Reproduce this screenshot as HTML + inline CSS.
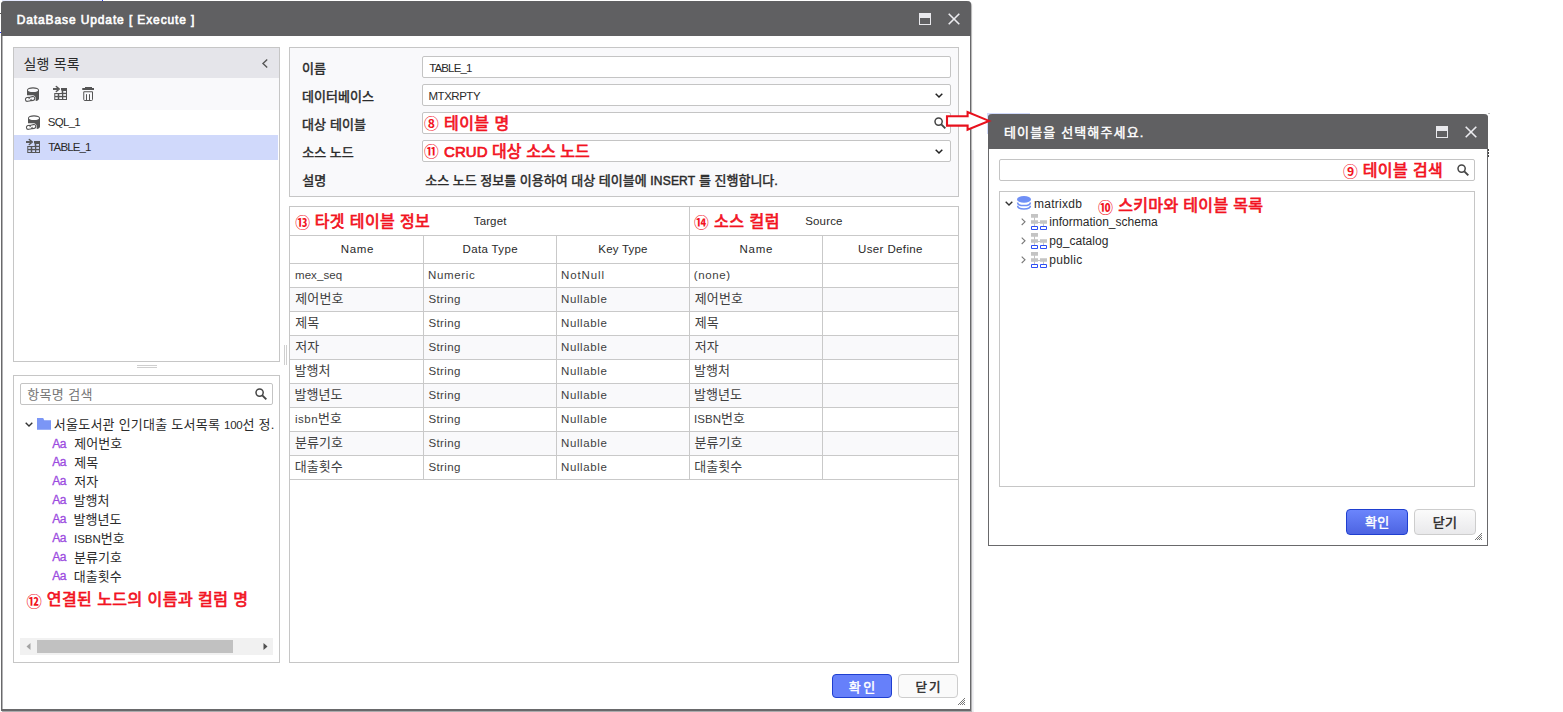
<!DOCTYPE html>
<html lang="ko">
<head>
<meta charset="utf-8">
<title>DataBase Update [ Execute ]</title>
<style>
*{box-sizing:border-box;margin:0;padding:0}
html,body{width:1563px;height:712px;overflow:hidden;background:#fff}
body{position:relative;font-family:"Liberation Sans","Noto Sans CJK KR",sans-serif;font-size:12px;color:#222}
div{position:absolute}
.t{white-space:nowrap;line-height:16px;height:16px;font-size:13px;color:#2a2a2a}
.l{font-size:11.5px}
.l2{font-size:12px}
.b{font-weight:400;-webkit-text-stroke:0.45px currentColor}
.w{color:#fff}
.g{color:#404040}
.red{color:#f2131f;font-weight:400;-webkit-text-stroke:0.7px currentColor;font-size:16px;line-height:20px;height:20px;white-space:nowrap}
.cn{color:#f2131f;font-size:15px;line-height:20px;height:20px;white-space:nowrap;font-weight:700}
.title{background:#606062}
.panel{border:1px solid #c6c6c6;background:#fff}
.inp{border:1px solid #c4c4c4;background:#fff;border-radius:2px}
.btn{border-radius:4px}
.ok{background:#6680fa;border:1px solid #1f3fd0}
.cl{background:#fafafa;border:1px solid #cdcdcd}
.hl{background:#c9c9c9;height:1px}
.vl{background:#c9c9c9;width:1px}
svg{position:absolute;overflow:visible}
i{font-style:normal}
</style>
</head>
<body>
<!-- main dialog -->
<div style="left:2px;top:0;width:100px;height:1px;background:#e6eaff"></div><div style="left:102px;top:0;width:1px;height:1px;background:#2b3bf0"></div><div style="left:0;top:13px;width:1px;height:1px;background:#555"></div><div style="left:0;top:32px;width:1px;height:1px;background:#2b3bf0"></div>
<div style="left:971px;top:150px;width:3px;height:562px;background:#f1f1f4"></div><div style="left:2px;top:711px;width:972px;height:1px;background:#ebebee"></div>
<div style="left:1px;top:1px;width:970px;height:710px;background:#fff;border-radius:4px 4px 0 0;border:solid #69696b;border-width:0 1px 2px 1px;box-shadow:1px 1px 1px rgba(0,0,0,.3),inset 1px 0 0 #b4b4b6"></div>
<div class="title" style="left:1px;top:1px;width:970px;height:35px;border-radius:4px 4px 0 0"></div>
<svg style="left:919px;top:13px" width="12" height="12" viewBox="0 0 12 12"><path d="M0 0h12v12H0z" fill="#e9e9ed"/><path d="M1 5h10v6H1z" fill="#606062"/></svg>
<svg style="left:948px;top:13px" width="12" height="12" viewBox="0 0 12 12"><path d="M.7.7l10.6 10.6M11.3.7L.7 11.3" stroke="#ececf0" stroke-width="1.6"/></svg>
<div class="panel" style="left:13px;top:47px;width:267px;height:315px"></div>
<div style="left:14px;top:48px;width:265px;height:30px;background:#e5e5ea"></div>
<div style="left:14px;top:78px;width:265px;height:32px;background:#f9f9fb"></div>
<div style="left:14px;top:135px;width:264px;height:25px;background:#d0d9fb"></div>
<svg style="left:261.5px;top:58.7px" width="6" height="9" viewBox="0 0 6 9"><path d="M5.2.6L1 4.5l4.2 3.9" fill="none" stroke="#555" stroke-width="1.4"/></svg>
<svg style="left:25px;top:86.5px" width="15" height="15" viewBox="0 0 15 15"><path fill-rule="evenodd" d="M2 3.1A6 2.9 0 0 1 14 3.1V11.4A6 2.75 0 0 1 10.7 14V11.6C10.7 9.6 9.6 8.3 7.6 8.3H2zM2.9 3.2A5.1 1.8 0 0 0 13.1 3.2A5.1 1.8 0 0 0 2.9 3.2z" fill="#555"/><g fill="none" stroke="#555" stroke-width="1.05" transform="rotate(-10 5 12)"><path d="M4.6 10.1H2.3a1.9 1.9 0 0 0 0 3.8H4.2c1.2 0 1.9-.9 1.9-1.9M5.6 13.9H7.9a1.9 1.9 0 0 0 0-3.8H6c-1.2 0-1.9.9-1.9 1.9"/></g></svg>
<svg style="left:53px;top:86px" width="14" height="14" viewBox="0 0 14 14"><path d="M8 2H14V14H1.25V7H8.7V4.4H8z" fill="#555"/><g fill="#f9f9fb"><rect x="2.25" y="8.1" width="2.5" height="1.75"/><rect x="6.25" y="8.1" width="2.75" height="1.75"/><rect x="10.25" y="8.1" width="2.75" height="1.75"/><rect x="2.25" y="11.25" width="2.5" height="1.75"/><rect x="6.25" y="11.25" width="2.75" height="1.75"/><rect x="10.25" y="11.25" width="2.75" height="1.75"/><rect x="10.25" y="5" width="2.75" height="1.75"/></g><path d="M0 3H5.6" stroke="#555" stroke-width="1.9" fill="none"/><path d="M3.3.5L6.3 3 3.3 5.5" stroke="#555" stroke-width="1.5" fill="none" stroke-linecap="round" stroke-linejoin="round"/></svg>
<svg style="left:82px;top:87px" width="12" height="15" viewBox="0 0 12 15"><path d="M3 0h7v1.2H3zM.25 1h11.75v2H.25z" fill="#555"/><path d="M1.75 4.75h8.75v7.75a1 1 0 0 1-1 1h-6.75a1 1 0 0 1-1-1z" fill="none" stroke="#555" stroke-width="1"/><path d="M4.5 7.2V13M7.5 7.2V13" stroke="#555" stroke-width="1"/></svg>
<svg style="left:26px;top:114.7px" width="15" height="15" viewBox="0 0 15 15"><path fill-rule="evenodd" d="M2 3.1A6 2.9 0 0 1 14 3.1V11.4A6 2.75 0 0 1 10.7 14V11.6C10.7 9.6 9.6 8.3 7.6 8.3H2zM2.9 3.2A5.1 1.8 0 0 0 13.1 3.2A5.1 1.8 0 0 0 2.9 3.2z" fill="#555"/><g fill="none" stroke="#555" stroke-width="1.05" transform="rotate(-10 5 12)"><path d="M4.6 10.1H2.3a1.9 1.9 0 0 0 0 3.8H4.2c1.2 0 1.9-.9 1.9-1.9M5.6 13.9H7.9a1.9 1.9 0 0 0 0-3.8H6c-1.2 0-1.9.9-1.9 1.9"/></g></svg>
<svg style="left:26px;top:139px" width="14" height="14" viewBox="0 0 14 14"><path d="M8 2H14V14H1.25V7H8.7V4.4H8z" fill="#555"/><g fill="#d0d9fb"><rect x="2.25" y="8.1" width="2.5" height="1.75"/><rect x="6.25" y="8.1" width="2.75" height="1.75"/><rect x="10.25" y="8.1" width="2.75" height="1.75"/><rect x="2.25" y="11.25" width="2.5" height="1.75"/><rect x="6.25" y="11.25" width="2.75" height="1.75"/><rect x="10.25" y="11.25" width="2.75" height="1.75"/><rect x="10.25" y="5" width="2.75" height="1.75"/></g><path d="M0 3H5.6" stroke="#555" stroke-width="1.9" fill="none"/><path d="M3.3.5L6.3 3 3.3 5.5" stroke="#555" stroke-width="1.5" fill="none" stroke-linecap="round" stroke-linejoin="round"/></svg>
<div style="left:137px;top:365px;width:20px;height:3px;border-top:1px solid #cfcfcf;border-bottom:1px solid #cfcfcf"></div>
<div style="left:284px;top:345px;width:3px;height:20px;border-left:1px solid #cfcfcf;border-right:1px solid #cfcfcf"></div>
<div class="panel" style="left:13px;top:375px;width:267px;height:288px"></div>
<div class="inp" style="left:20px;top:383px;width:253px;height:22px"></div>
<svg style="left:255px;top:388px" width="12" height="12" viewBox="0 0 12 12"><circle cx="4.6" cy="4.6" r="3.6" fill="none" stroke="#444" stroke-width="1.5"/><path d="M7.3 7.3l4 4" stroke="#444" stroke-width="1.9"/></svg>
<svg style="left:24.5px;top:422px" width="8" height="5" viewBox="0 0 8 5"><path d="M.7.7L4 4l3.3-3.3" fill="none" stroke="#333" stroke-width="1.4"/></svg>
<svg style="left:37px;top:418px" width="14" height="12" viewBox="0 0 14 12"><path d="M0 0h6.2l1 2.3H14V11.8H0z" fill="#7b96f6"/></svg>
<div style="left:20px;top:638px;width:253px;height:17px;background:#f1f1f1"></div>
<div style="left:37px;top:640px;width:196px;height:13px;background:#c1c1c1"></div>
<svg style="left:26px;top:643px" width="5" height="7" viewBox="0 0 5 7"><path d="M4.5 0L.5 3.5l4 3.5z" fill="#a3a3a3"/></svg>
<svg style="left:263px;top:643px" width="5" height="7" viewBox="0 0 5 7"><path d="M.5 0l4 3.5-4 3.5z" fill="#505050"/></svg>
<div class="panel" style="left:289px;top:47px;width:670px;height:150px;background:#f9f9fb"></div>
<div class="inp" style="left:422px;top:56px;width:529px;height:22px"></div>
<div class="inp" style="left:422px;top:84px;width:529px;height:22px"></div>
<div class="inp" style="left:422px;top:112px;width:529px;height:22px"></div>
<div class="inp" style="left:422px;top:140px;width:529px;height:22px"></div>
<svg style="left:935.3px;top:92.6px" width="8" height="5" viewBox="0 0 8 5"><path d="M.7.7L4 4l3.3-3.3" fill="none" stroke="#222" stroke-width="1.5"/></svg>
<svg style="left:935.3px;top:148.6px" width="8" height="5" viewBox="0 0 8 5"><path d="M.7.7L4 4l3.3-3.3" fill="none" stroke="#222" stroke-width="1.5"/></svg>
<svg style="left:934px;top:117px" width="12" height="12" viewBox="0 0 12 12"><circle cx="4.6" cy="4.6" r="3.6" fill="none" stroke="#444" stroke-width="1.5"/><path d="M7.3 7.3l4 4" stroke="#444" stroke-width="1.9"/></svg>
<div class="panel" style="left:289px;top:206px;width:670px;height:457px"></div>
<div style="left:290px;top:288px;width:668px;height:23px;background:#f9f9fb"></div>
<div style="left:290px;top:336px;width:668px;height:23px;background:#f9f9fb"></div>
<div style="left:290px;top:384px;width:668px;height:23px;background:#f9f9fb"></div>
<div style="left:290px;top:432px;width:668px;height:23px;background:#f9f9fb"></div>
<div class="hl" style="left:290px;top:235px;width:668px"></div>
<div class="hl" style="left:290px;top:263px;width:668px"></div>
<div class="hl" style="left:290px;top:287px;width:668px"></div>
<div class="hl" style="left:290px;top:311px;width:668px"></div>
<div class="hl" style="left:290px;top:335px;width:668px"></div>
<div class="hl" style="left:290px;top:359px;width:668px"></div>
<div class="hl" style="left:290px;top:383px;width:668px"></div>
<div class="hl" style="left:290px;top:407px;width:668px"></div>
<div class="hl" style="left:290px;top:431px;width:668px"></div>
<div class="hl" style="left:290px;top:455px;width:668px"></div>
<div class="hl" style="left:290px;top:479px;width:668px"></div>
<div class="vl" style="left:423px;top:235px;height:245px"></div>
<div class="vl" style="left:556px;top:235px;height:245px"></div>
<div class="vl" style="left:822px;top:235px;height:245px"></div>
<div class="vl" style="left:689px;top:207px;height:273px"></div>
<div class="btn ok" style="left:832px;top:674px;width:60px;height:24px"></div>
<div class="btn cl" style="left:898px;top:674px;width:60px;height:24px"></div>
<svg style="left:958px;top:698px" width="7" height="7" viewBox="0 0 7 7"><path d="M0 7L7 0M2 7L7 2M4 7l3-3M6 7l1-1" stroke="#666" stroke-width="0.9"/></svg>
<!-- table select dialog -->
<div style="left:987px;top:113px;width:43px;height:21px;background:#d0d9fb"></div>
<div style="left:988px;top:114px;width:500px;height:432px;background:#fff;border-radius:4px 4px 0 0;border:solid #69696b;border-width:0 1px 1px 1px"></div>
<div class="title" style="left:988px;top:114px;width:500px;height:35px;border-radius:4px 4px 0 0"></div>
<svg style="left:1436px;top:126px" width="12" height="12" viewBox="0 0 12 12"><path d="M0 0h12v12H0z" fill="#e9e9ed"/><path d="M1 5h10v6H1z" fill="#606062"/></svg>
<svg style="left:1465px;top:126px" width="12" height="12" viewBox="0 0 12 12"><path d="M.7.7l10.6 10.6M11.3.7L.7 11.3" stroke="#ececf0" stroke-width="1.6"/></svg>
<div class="inp" style="left:999px;top:159px;width:476px;height:22px"></div>
<svg style="left:1457px;top:164px" width="12" height="12" viewBox="0 0 12 12"><circle cx="4.6" cy="4.6" r="3.6" fill="none" stroke="#444" stroke-width="1.5"/><path d="M7.3 7.3l4 4" stroke="#444" stroke-width="1.9"/></svg>
<div class="panel" style="left:999px;top:191px;width:476px;height:296px"></div>
<svg style="left:1004.5px;top:201px" width="8" height="5" viewBox="0 0 8 5"><path d="M.7.7L4 4l3.3-3.3" fill="none" stroke="#333" stroke-width="1.4"/></svg>
<svg style="left:1017px;top:196px" width="14" height="14" viewBox="0 0 14 14"><ellipse cx="7" cy="3.4" rx="7" ry="3.4" fill="#6f8ff6"/><path d="M.6 6.4c0 1.9 2.9 3.2 6.4 3.2s6.4-1.3 6.4-3.2" fill="none" stroke="#6f8ff6" stroke-width="1.5"/><path d="M.6 9.8c0 1.9 2.9 3.2 6.4 3.2s6.4-1.3 6.4-3.2" fill="none" stroke="#6f8ff6" stroke-width="1.5"/></svg>
<svg style="left:1021px;top:218.2px" width="5" height="8" viewBox="0 0 5 8"><path d="M.7.6L4 3.8.7 7" fill="none" stroke="#777" stroke-width="1.1"/></svg>
<svg style="left:1031px;top:214px" width="16" height="16" viewBox="0 0 16 16"><path d="M0 0h7v3.8H0zM3 3.8h1v2.4H3zM0 6.2h7v3.6H0zM9 6.2h7v3.6H9zM7 8h2v1H7zM3 9.8h1v2.2H3zM12 9.8h1v2.2h-1z" fill="#c4c4c4"/><path d="M.5 12.5h6v3h-6zM9.5 12.5h6v3h-6z" fill="#fff" stroke="#2f4ff5" stroke-width="1"/></svg>
<svg style="left:1021px;top:237.2px" width="5" height="8" viewBox="0 0 5 8"><path d="M.7.6L4 3.8.7 7" fill="none" stroke="#777" stroke-width="1.1"/></svg>
<svg style="left:1031px;top:233px" width="16" height="16" viewBox="0 0 16 16"><path d="M0 0h7v3.8H0zM3 3.8h1v2.4H3zM0 6.2h7v3.6H0zM9 6.2h7v3.6H9zM7 8h2v1H7zM3 9.8h1v2.2H3zM12 9.8h1v2.2h-1z" fill="#c4c4c4"/><path d="M.5 12.5h6v3h-6zM9.5 12.5h6v3h-6z" fill="#fff" stroke="#2f4ff5" stroke-width="1"/></svg>
<svg style="left:1021px;top:256.2px" width="5" height="8" viewBox="0 0 5 8"><path d="M.7.6L4 3.8.7 7" fill="none" stroke="#777" stroke-width="1.1"/></svg>
<svg style="left:1031px;top:252px" width="16" height="16" viewBox="0 0 16 16"><path d="M0 0h7v3.8H0zM3 3.8h1v2.4H3zM0 6.2h7v3.6H0zM9 6.2h7v3.6H9zM7 8h2v1H7zM3 9.8h1v2.2H3zM12 9.8h1v2.2h-1z" fill="#c4c4c4"/><path d="M.5 12.5h6v3h-6zM9.5 12.5h6v3h-6z" fill="#fff" stroke="#2f4ff5" stroke-width="1"/></svg>
<div class="btn ok" style="left:1346px;top:509px;width:62px;height:26px;background:linear-gradient(#6b85fc,#4d64e2)"></div>
<div class="btn cl" style="left:1414px;top:509px;width:62px;height:26px;background:linear-gradient(#fbfbfb,#e9e9eb)"></div>
<svg style="left:1475px;top:533px" width="7" height="7" viewBox="0 0 7 7"><path d="M0 7L7 0M2 7L7 2M4 7l3-3M6 7l1-1" stroke="#666" stroke-width="0.9"/></svg>
<div style="left:1488px;top:149px;width:1px;height:9px;background:repeating-linear-gradient(#444 0 2px,#fff 2px 3px)"></div><div style="left:1488px;top:113px;width:2px;height:1px;background:#bbb"></div>
<svg style="left:940px;top:105px" width="56" height="32" viewBox="940 105 56 32"><path d="M947 116.2H967.6V112.1L989 120.9 967.6 129.7V125.6H947z" fill="#fff" stroke="#e8111d" stroke-width="2.1" stroke-linejoin="miter"/></svg>
<!-- text -->
<div class="t b w" style="left:16.75px;top:12px;font-size:12px;-webkit-text-stroke:0.6px currentColor;letter-spacing:0.88px">DataBase Update [ Execute ]</div>
<div class="t" style="left:23.5px;top:56px;font-size:14px;letter-spacing:0.21px">실행 목록</div>
<div class="t l" style="left:47.75px;top:114px;letter-spacing:-0.70px">SQL_1</div>
<div class="t l" style="left:48.25px;top:139px;letter-spacing:-0.85px">TABLE_1</div>
<div class="t" style="left:27.25px;top:387px;color:#777;letter-spacing:0.35px">항목명 검색</div>
<div class="t" style="left:53.75px;top:417px;letter-spacing:0.25px">서울도서관 인기대출 도서목록 <i style="letter-spacing:-0.3px;font-size:11.5px">100</i>선 정.</div>
<div class="t l2" style="left:52.25px;top:436px;color:#9c4be0;-webkit-text-stroke:0.3px currentColor;letter-spacing:-0.40px">Aa</div>
<div class="t" style="left:74.25px;top:436px;letter-spacing:0.03px">제어번호</div>
<div class="t l2" style="left:52.25px;top:454px;color:#9c4be0;-webkit-text-stroke:0.3px currentColor;letter-spacing:-0.40px">Aa</div>
<div class="t" style="left:74.25px;top:455px;">제목</div>
<div class="t l2" style="left:52.25px;top:473px;color:#9c4be0;-webkit-text-stroke:0.3px currentColor;letter-spacing:-0.40px">Aa</div>
<div class="t" style="left:74.25px;top:474px;">저자</div>
<div class="t l2" style="left:52.25px;top:492px;color:#9c4be0;-webkit-text-stroke:0.3px currentColor;letter-spacing:-0.40px">Aa</div>
<div class="t" style="left:73.5px;top:493px;">발행처</div>
<div class="t l2" style="left:52.25px;top:511px;color:#9c4be0;-webkit-text-stroke:0.3px currentColor;letter-spacing:-0.40px">Aa</div>
<div class="t" style="left:73.5px;top:512px;">발행년도</div>
<div class="t l2" style="left:52.25px;top:530px;color:#9c4be0;-webkit-text-stroke:0.3px currentColor;letter-spacing:-0.40px">Aa</div>
<div class="t" style="left:74px;top:531px;letter-spacing:0.00px"><i style="letter-spacing:-0.03px;font-size:11.5px">ISBN</i>번호</div>
<div class="t l2" style="left:52.25px;top:549px;color:#9c4be0;-webkit-text-stroke:0.3px currentColor;letter-spacing:-0.40px">Aa</div>
<div class="t" style="left:74px;top:550px;">분류기호</div>
<div class="t l2" style="left:52.25px;top:568px;color:#9c4be0;-webkit-text-stroke:0.3px currentColor;letter-spacing:-0.40px">Aa</div>
<div class="t" style="left:73.75px;top:569px;">대출횟수</div>
<div class="cn" style="left:26.5px;top:592px;font-size:15.25px">⑫</div>
<div class="red" style="left:46.75px;top:590px;letter-spacing:0.45px">연결된 노드의 이름과 컬럼 명</div>
<div class="t b" style="left:302px;top:61px;letter-spacing:0.10px">이름</div>
<div class="t b" style="left:302px;top:89px;letter-spacing:0.05px">데이터베이스</div>
<div class="t b" style="left:302px;top:117px;letter-spacing:0.12px">대상 테이블</div>
<div class="t b" style="left:302.25px;top:145px;">소스 노드</div>
<div class="t b" style="left:302.25px;top:173px;letter-spacing:0.10px">설명</div>
<div class="t l" style="left:429.25px;top:60px;letter-spacing:-0.88px">TABLE_1</div>
<div class="t l" style="left:428.5px;top:88px;letter-spacing:-0.48px">MTXRPTY</div>
<div class="cn" style="left:424px;top:114px;font-size:14.70px">⑧</div>
<div class="red" style="left:444px;top:114px;letter-spacing:0.46px">테이블 명</div>
<div class="cn" style="left:424px;top:142px;font-size:14.70px">⑪</div>
<div class="red" style="left:444px;top:142px;letter-spacing:0.06px"><i style="font-size:15px">CRUD</i> 대상 소스 노드</div>
<div class="t b" style="left:425.25px;top:173px;letter-spacing:0.00px">소스 노드 정보를 이용하여 대상 테이블에 <i style="letter-spacing:0.21px;font-size:12px">INSERT</i> 를 진행합니다.</div>
<div class="cn" style="left:295.25px;top:213px;font-size:14.75px">⑬</div>
<div class="red" style="left:314.75px;top:212px;letter-spacing:0.38px">타겟 테이블 정보</div>
<div class="t l" style="left:473.75px;top:213px;letter-spacing:0.13px">Target</div>
<div class="cn" style="left:694px;top:213px;font-size:14.75px">⑭</div>
<div class="red" style="left:714px;top:212px;letter-spacing:0.56px">소스 컬럼</div>
<div class="t l" style="left:805.25px;top:213px;letter-spacing:0.15px">Source</div>
<div class="t l" style="left:340.75px;top:241px;letter-spacing:0.67px">Name</div>
<div class="t l" style="left:462.5px;top:241px;letter-spacing:0.36px">Data Type</div>
<div class="t l" style="left:598.25px;top:241px;letter-spacing:0.21px">Key Type</div>
<div class="t l" style="left:739.5px;top:241px;letter-spacing:0.75px">Name</div>
<div class="t l" style="left:858px;top:241px;letter-spacing:0.38px">User Define</div>
<div class="t l g" style="left:295px;top:267px;letter-spacing:0.07px">mex_seq</div>
<div class="t l g" style="left:428px;top:267px;letter-spacing:0.67px">Numeric</div>
<div class="t l g" style="left:561px;top:267px;letter-spacing:0.90px">NotNull</div>
<div class="t l g" style="left:693.75px;top:267px;letter-spacing:0.60px">(none)</div>
<div class="t g" style="left:295.25px;top:291px;letter-spacing:0.15px">제어번호</div>
<div class="t l g" style="left:428.5px;top:291px;letter-spacing:0.35px">String</div>
<div class="t l g" style="left:561px;top:291px;letter-spacing:0.61px">Nullable</div>
<div class="t g" style="left:694.75px;top:291px;letter-spacing:0.15px">제어번호</div>
<div class="t g" style="left:295.25px;top:315px;">제목</div>
<div class="t l g" style="left:428.5px;top:315px;letter-spacing:0.35px">String</div>
<div class="t l g" style="left:561px;top:315px;letter-spacing:0.61px">Nullable</div>
<div class="t g" style="left:694.75px;top:315px;">제목</div>
<div class="t g" style="left:295.25px;top:339px;">저자</div>
<div class="t l g" style="left:428.5px;top:339px;letter-spacing:0.35px">String</div>
<div class="t l g" style="left:561px;top:339px;letter-spacing:0.61px">Nullable</div>
<div class="t g" style="left:694.75px;top:339px;">저자</div>
<div class="t g" style="left:294.5px;top:363px;">발행처</div>
<div class="t l g" style="left:428.5px;top:363px;letter-spacing:0.35px">String</div>
<div class="t l g" style="left:561px;top:363px;letter-spacing:0.61px">Nullable</div>
<div class="t g" style="left:694px;top:363px;">발행처</div>
<div class="t g" style="left:294.5px;top:387px;">발행년도</div>
<div class="t l g" style="left:428.5px;top:387px;letter-spacing:0.35px">String</div>
<div class="t l g" style="left:561px;top:387px;letter-spacing:0.61px">Nullable</div>
<div class="t g" style="left:694px;top:387px;">발행년도</div>
<div class="t g" style="left:295px;top:411px;letter-spacing:0.00px"><i style="letter-spacing:0.50px;font-size:11.5px">isbn</i>번호</div>
<div class="t l g" style="left:428.5px;top:411px;letter-spacing:0.35px">String</div>
<div class="t l g" style="left:561px;top:411px;letter-spacing:0.61px">Nullable</div>
<div class="t g" style="left:694px;top:411px;letter-spacing:0.00px"><i style="letter-spacing:0.03px;font-size:11.5px">ISBN</i>번호</div>
<div class="t g" style="left:295px;top:435px;">분류기호</div>
<div class="t l g" style="left:428.5px;top:435px;letter-spacing:0.35px">String</div>
<div class="t l g" style="left:561px;top:435px;letter-spacing:0.61px">Nullable</div>
<div class="t g" style="left:694.5px;top:435px;">분류기호</div>
<div class="t g" style="left:294.75px;top:459px;">대출횟수</div>
<div class="t l g" style="left:428.5px;top:459px;letter-spacing:0.35px">String</div>
<div class="t l g" style="left:561px;top:459px;letter-spacing:0.61px">Nullable</div>
<div class="t g" style="left:694.25px;top:459px;">대출횟수</div>
<div class="t b w" style="left:848.75px;top:680px;font-size:13px;letter-spacing:2.50px">확인</div>
<div class="t b" style="left:915.5px;top:680px;font-size:12.5px;letter-spacing:1.90px">닫기</div>
<div class="t b w" style="left:1004px;top:125px;font-size:13px;letter-spacing:1.14px">테이블을 선택해주세요.</div>
<div class="cn" style="left:1343px;top:162px;font-size:14.75px">⑨</div>
<div class="red" style="left:1362.75px;top:161px;letter-spacing:0.40px">테이블 검색</div>
<div class="t l2" style="left:1034px;top:196px;letter-spacing:0.26px">matrixdb</div>
<div class="cn" style="left:1098px;top:198px;font-size:15.00px">⑩</div>
<div class="red" style="left:1118.25px;top:196px;letter-spacing:0.34px">스키마와 테이블 목록</div>
<div class="t l2" style="left:1049.25px;top:214px;letter-spacing:0.02px">information_schema</div>
<div class="t l2" style="left:1049.25px;top:233px;letter-spacing:0.04px">pg_catalog</div>
<div class="t l2" style="left:1049.25px;top:252px;letter-spacing:0.35px">public</div>
<div class="t b w" style="left:1365px;top:515px;font-size:13px;letter-spacing:0.35px">확인</div>
<div class="t b" style="left:1432.75px;top:515px;font-size:13px;letter-spacing:0.35px">닫기</div>
</body>
</html>
